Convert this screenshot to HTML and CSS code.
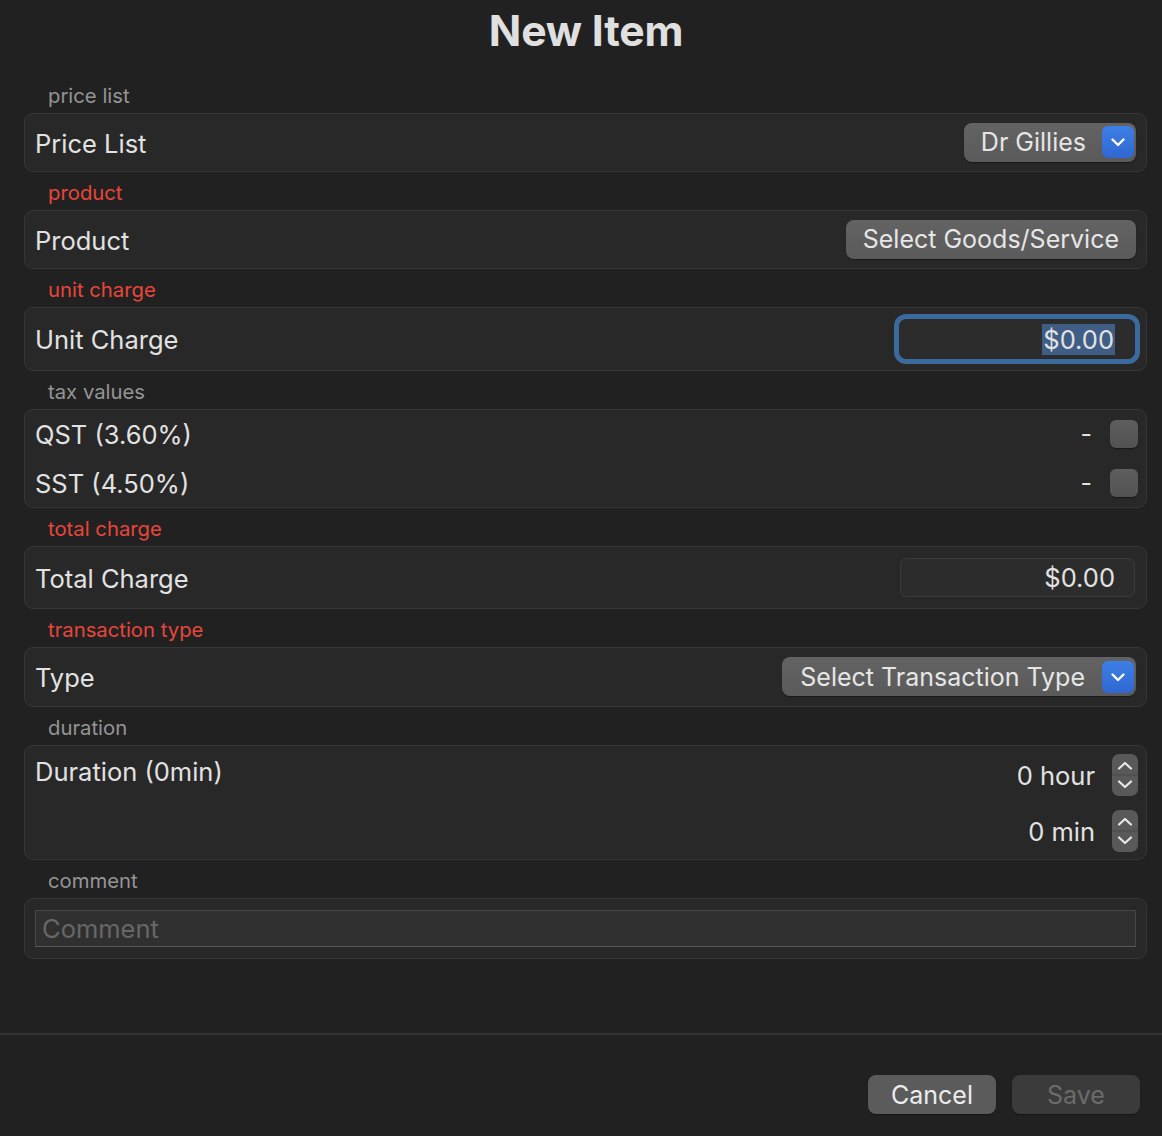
FILE: index.html
```html
<!DOCTYPE html>
<html lang="en">

<head>
    <meta charset="UTF-8">
    <meta name="viewport" content="width=device-width, initial-scale=1.0">
    <title>New Item</title>
    <link rel="stylesheet" href="styles.css">
</head>

<body>
    <div id="wrapper">
        <h1 class="title">New Item</h1>

        <div class="form">
            <div class="section">
                <div class="sectionLabel">price list</div>
                <div class="box">
                    <div class="row">
                        <span class="rowLabel">Price List</span>
                        <button class="popup">
                            <span>Dr Gillies</span>
                            <span class="popupArrow"><svg width="32" height="32" viewBox="0 0 32 32"><path d="M10.5 13.5 L16 19 L21.5 13.5" fill="none" stroke="#fff" stroke-width="2.4" stroke-linecap="round" stroke-linejoin="round"/></svg></span>
                        </button>
                    </div>
                </div>
            </div>

            <div class="section">
                <div class="sectionLabel red">product</div>
                <div class="box">
                    <div class="row">
                        <span class="rowLabel">Product</span>
                        <button class="pushButton">Select Goods/Service</button>
                    </div>
                </div>
            </div>

            <div class="section">
                <div class="sectionLabel red">unit charge</div>
                <div class="box">
                    <div class="row rowFocus">
                        <span class="rowLabel">Unit Charge</span>
                        <div class="field fieldFocus"><span class="selected">$0.00</span></div>
                    </div>
                </div>
            </div>

            <div class="section">
                <div class="sectionLabel">tax values</div>
                <div class="box">
                    <div class="row rowTax">
                        <span class="rowLabel">QST (3.60%)</span>
                        <div class="taxRight"><span class="dash">-</span><span class="checkbox"></span></div>
                    </div>
                    <div class="row rowTax">
                        <span class="rowLabel">SST (4.50%)</span>
                        <div class="taxRight"><span class="dash">-</span><span class="checkbox"></span></div>
                    </div>
                </div>
            </div>

            <div class="section">
                <div class="sectionLabel red">total charge</div>
                <div class="box">
                    <div class="row rowTall">
                        <span class="rowLabel">Total Charge</span>
                        <div class="field">$0.00</div>
                    </div>
                </div>
            </div>

            <div class="section">
                <div class="sectionLabel red">transaction type</div>
                <div class="box">
                    <div class="row rowType">
                        <span class="rowLabel">Type</span>
                        <button class="popup popupWide">
                            <span>Select Transaction Type</span>
                            <span class="popupArrow"><svg width="32" height="32" viewBox="0 0 32 32"><path d="M10.5 13.5 L16 19 L21.5 13.5" fill="none" stroke="#fff" stroke-width="2.4" stroke-linecap="round" stroke-linejoin="round"/></svg></span>
                        </button>
                    </div>
                </div>
            </div>

            <div class="section">
                <div class="sectionLabel">duration</div>
                <div class="box">
                    <div class="durationRow">
                        <span class="rowLabel durationLabel">Duration (0min)</span>
                        <div class="durationFields">
                            <div class="stepRow">
                                <span>0 hour</span>
                                <span class="stepper">
                                    <svg width="26" height="42" viewBox="0 0 26 42"><path d="M7 14.5 L13 9 L19 14.5" fill="none" stroke="#e8e8e8" stroke-width="2.2" stroke-linecap="round" stroke-linejoin="round"/><line x1="0" y1="21" x2="26" y2="21" stroke="#4a4a4a" stroke-width="1"/><path d="M7 27.5 L13 33 L19 27.5" fill="none" stroke="#e8e8e8" stroke-width="2.2" stroke-linecap="round" stroke-linejoin="round"/></svg>
                                </span>
                            </div>
                            <div class="stepRow">
                                <span>0 min</span>
                                <span class="stepper">
                                    <svg width="26" height="42" viewBox="0 0 26 42"><path d="M7 14.5 L13 9 L19 14.5" fill="none" stroke="#e8e8e8" stroke-width="2.2" stroke-linecap="round" stroke-linejoin="round"/><line x1="0" y1="21" x2="26" y2="21" stroke="#4a4a4a" stroke-width="1"/><path d="M7 27.5 L13 33 L19 27.5" fill="none" stroke="#e8e8e8" stroke-width="2.2" stroke-linecap="round" stroke-linejoin="round"/></svg>
                                </span>
                            </div>
                        </div>
                    </div>
                </div>
            </div>

            <div class="section">
                <div class="sectionLabel">comment</div>
                <div class="box boxComment">
                    <div class="commentField">Comment</div>
                </div>
            </div>
        </div>

        <div class="footer">
            <button class="footButton">Cancel</button>
            <button class="footButton disabled">Save</button>
        </div>
    </div>
</body>

</html>
```

FILE: styles.css
```css
body {
    margin: 0;
    background-color: #212121;
    color: #e2e2e2;
    font-family: Inter, "Noto Sans", sans-serif;
}

#wrapper {
    width: 1162px;
    height: 1136px;
    overflow: hidden;
}

.title {
    margin: 0;
    height: 62px;
    line-height: 62px;
    padding-left: 10px;
    text-align: center;
    font-size: 42.7px;
    font-weight: 700;
    color: #e0e0e0;
    letter-spacing: -0.2px;
}

.form {
    display: flex;
    flex-direction: column;
    gap: 9px;
    padding: 22px 15px 0 24px;
}

.section {
    display: flex;
    flex-direction: column;
    gap: 5px;
}

.sectionLabel {
    padding-left: 24px;
    height: 24px;
    line-height: 24px;
    font-size: 20.3px;
    color: #959595;
}

.sectionLabel.red {
    color: #e8463b;
}

.box {
    background-color: #282828;
    border: 1px solid #363636;
    border-radius: 9px;
    padding: 0 10px;
}

.row {
    display: flex;
    align-items: center;
    justify-content: space-between;
    height: 57px;
}

.rowFocus {
    height: 62px;
}

.rowTall {
    height: 61px;
}

.rowType {
    height: 58px;
}

.rowTax {
    height: 48.5px;
}

.rowLabel {
    font-size: 25.5px;
    padding-top: 1px;
}

.popup,
.pushButton {
    height: 39px;
    border: none;
    border-radius: 8px;
    background: linear-gradient(#636363, #5a5a5a);
    box-shadow: 0 1px 1px rgba(0, 0, 0, 0.4);
    color: #e6e6e6;
    font-family: Inter, "Noto Sans", sans-serif;
    font-size: 25px;
    display: flex;
    align-items: center;
    margin-top: -1px;
}

.popup {
    padding: 0 2px 0 17px;
    gap: 16px;
}

.popupWide {
    gap: 17px;
    padding-left: 18px;
}

.pushButton {
    padding: 0 17px;
}

.popupArrow {
    width: 32px;
    height: 32px;
    border-radius: 6px;
    background: linear-gradient(#3c7fe6, #2f68d0);
    display: flex;
    align-items: center;
    justify-content: center;
}

.field {
    width: 235px;
    height: 39px;
    box-sizing: border-box;
    padding: 0 19px 0 0;
    border: 1px solid #3a3a3a;
    border-radius: 6px;
    background-color: #2c2c2c;
    display: flex;
    align-items: center;
    justify-content: flex-end;
    font-size: 25.5px;
    margin-right: 1px;
}

.fieldFocus {
    width: 236px;
    height: 40px;
    border: 1px solid #2a2a2a;
    border-radius: 7px;
    box-shadow: 0 0 0 5px #3b6a9c;
    margin-right: 1px;
    padding-right: 19px;
}

.selected {
    background-color: #3f5d85;
    padding: 0 1px;
}

.taxRight {
    display: flex;
    align-items: center;
    gap: 18px;
    margin-right: -2px;
}

.dash {
    font-size: 25px;
}

.checkbox {
    width: 28px;
    height: 28px;
    border-radius: 6px;
    background: linear-gradient(#5e5e5e, #525252);
    box-shadow: 0 1px 1px rgba(0, 0, 0, 0.4);
}

.durationRow {
    display: flex;
    justify-content: space-between;
}

.durationLabel {
    padding-top: 10px;
    line-height: 32px;
}

.durationFields {
    display: flex;
    flex-direction: column;
    padding-top: 1px;
}

.stepRow {
    height: 56px;
    display: flex;
    align-items: center;
    justify-content: flex-end;
    gap: 17px;
    font-size: 25.5px;
    margin-right: -2px;
}

.stepper {
    width: 26px;
    height: 42px;
    border-radius: 7px;
    background-color: #595959;
    display: flex;
}

.boxComment {
    padding: 11px 10px;
}

.commentField {
    height: 37px;
    box-sizing: border-box;
    background-color: #303030;
    border: 1px solid #474747;
    border-bottom-color: #5a5a5a;
    padding-left: 6px;
    display: flex;
    align-items: center;
    font-size: 25.5px;
    color: #676767;
}

.footer {
    margin-top: 74px;
    border-top: 2px solid #333333;
    display: flex;
    justify-content: flex-end;
    gap: 16px;
    padding: 40px 22px 0 0;
}

.footButton {
    width: 128px;
    height: 39px;
    border: none;
    border-radius: 8px;
    background-color: #5b5b5b;
    color: #ececec;
    font-family: Inter, "Noto Sans", sans-serif;
    font-size: 25px;
    box-shadow: 0 1px 1px rgba(0, 0, 0, 0.4);
}

.footButton.disabled {
    background-color: #3b3b3b;
    color: #6b6b6b;
}
```
